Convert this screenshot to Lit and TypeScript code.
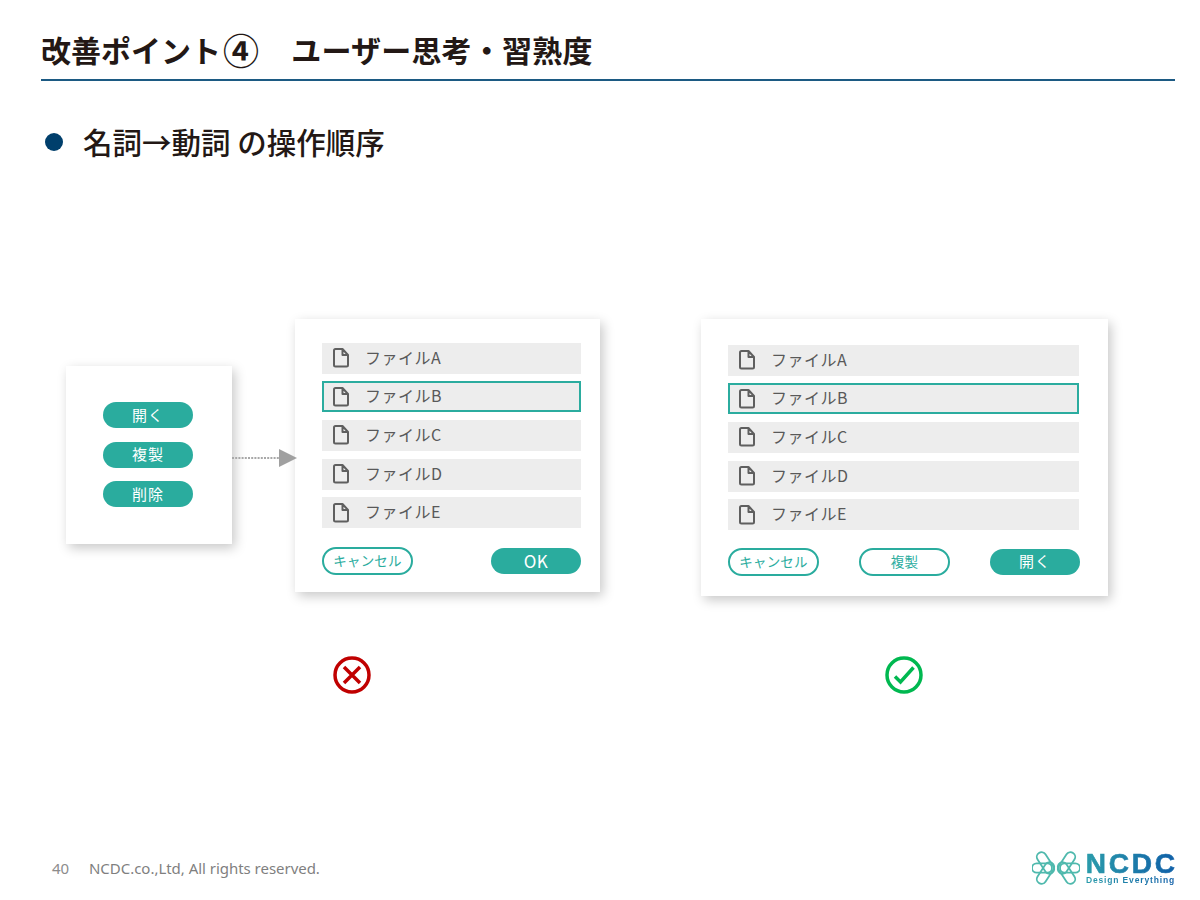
import { LitElement, html, css, svg } from "lit";
import { customElement } from "lit/decorators.js";

const fileIcon = html`<svg class="fi" width="18" height="20" viewBox="0 0 18 20"><path d="M3.500 1H10.500L16 7V17A1.500 1.500 0 0 1 14.500 18.500H3.500A1.500 1.500 0 0 1 2 17V2.500A1.500 1.500 0 0 1 3.500 1Z M10.500 1V7H16" fill="none" stroke="#5f5f5f" stroke-width="2" stroke-linejoin="round"/></svg>`;

const wing = svg`
  <rect x="-24" y="-4.700" width="20" height="9.400" rx="4.700"/>
  <rect x="-12" y="-4.700" width="24" height="9.400" rx="4.700" transform="translate(-10.500 -5) rotate(57)"/>
  <rect x="-12" y="-4.700" width="24" height="9.400" rx="4.700" transform="translate(-10.500 5) rotate(-57)"/>`;

@customElement("app-root")
export class AppRoot extends LitElement {
  static styles = css`
    :host { display: block; width: 1200px; height: 900px; background: #fff; overflow: hidden;
      font-family: "Noto Sans CJK JP", "Noto Sans", sans-serif; color: #231815; }
    .page { width: 1200px; height: 900px; display: flex; flex-direction: column; box-sizing: border-box; }
    .head { margin: 0 25px 0 41px; height: 81px; box-sizing: border-box; border-bottom: 2px solid #1c5a83;
      display: flex; align-items: flex-end; padding-bottom: 7px; }
    h1 { margin: 0; font-size: 30px; line-height: 46px; font-weight: 700; white-space: pre; }
    .num { font-size: 36px; line-height: 0; font-weight: 700; vertical-align: -3px; margin: 0 2px 0 2px; }
    .rest { letter-spacing: .2px; }
    .sub { display: flex; align-items: center; margin: 39px 0 0 45px; height: 44px; }
    .dot { width: 18px; height: 18px; border-radius: 50%; background: #003f6c; margin-right: 20px; }
    h2 { margin: -3px 0 0; font-size: 29.500px; font-weight: 500; line-height: 44px; white-space: pre; color: #231815; }
    .stage { display: flex; align-items: flex-start; margin-top: 155px; padding-left: 66px; height: 335.500px; }
    .card { background: #fff; box-shadow: 3px 4px 11px rgba(0,0,0,.22); box-sizing: border-box; flex: none; }
    .menu { width: 166px; height: 178px; margin-top: 47px; padding: 36px 2px 0 0; display: flex; flex-direction: column; align-items: center; gap: 13.500px; }
    .arrow { margin-top: 129px; margin-right: -2px; width: 65px; height: 20px; flex: none; position: relative; z-index: 1; }
    .dlg { display: flex; flex-direction: column; }
    .d1 { width: 305px; height: 273px; padding: 23.500px 19px 0 27px; }
    .d2 { width: 407px; height: 277px; padding: 25.500px 29px 0 27px; margin-left: 101px; }
    .rows { display: flex; flex-direction: column; gap: 7.700px; }
    .row { height: 31px; background: #ededed; display: flex; align-items: center; padding-left: 10px; box-sizing: border-box;
      font-size: 16px; color: #595959; letter-spacing: .5px; }
    .row.sel { box-shadow: inset 0 0 0 2px #2bac9f; }
    .row .fi { margin-right: 15px; flex: none; }
    .row span { line-height: 1; margin-top: -3px; }
    .btns { display: flex; justify-content: space-between; margin-top: 19.500px; }
    .d2 .btns { margin-top: 18.500px; margin-right: -1px; }
    .btn { width: 90px; height: 26px; border-radius: 13px; box-sizing: border-box; display: flex; align-items: center; justify-content: center;
      font-size: 14px; line-height: 1; }
    .solid { background: #2aac9e; color: #fff; font-size: 15px; letter-spacing: 1px; padding-bottom: 2px; }
    .ok { font-size: 17px; letter-spacing: .5px; padding-bottom: 0; }
    .ghost { border: 2px solid #2aac9e; color: #2aac9e; background: #fff; width: 91px; height: 28px; border-radius: 14px; margin-top: -1px; font-size: 13.500px; letter-spacing: .2px; }
    .verdicts { display: flex; height: 40px; padding-left: 332px; }
    .verdicts svg { flex: none; }
    .verdicts svg + svg { margin-left: 512px; }
    .foot { margin-top: auto; display: flex; align-items: center; height: 50px; margin-bottom: 7px; padding: 0 25px 0 52px; color: #888; }
    .pg { font-family: "Noto Sans", sans-serif; font-size: 15px; width: 37px; color: #8c8c8c; }
    .copy { font-family: "Noto Sans", sans-serif; font-size: 15px; color: #7f7f7f; letter-spacing: -.03px; }
    .logo { margin-left: auto; display: flex; align-items: center; gap: 6px; }
    .word { display: flex; flex-direction: column; align-items: flex-end; font-family: "Liberation Sans", sans-serif; font-weight: 700; }
    .w1, .w2 { background: linear-gradient(90deg, #2b9cab, #0f5ea8); -webkit-background-clip: text; background-clip: text; color: transparent; }
    .w1 { font-size: 28px; line-height: 24px; letter-spacing: 2.800px; margin-right: -2.800px; -webkit-text-stroke: .7px transparent; }
    .w2 { font-size: 8.500px; line-height: 9px; letter-spacing: .85px; }
  `;

  private row(name: string, sel = false) {
    return html`<div class="row ${sel ? "sel" : ""}">${fileIcon}<span>ファイル${name}</span></div>`;
  }

  private rows() {
    return html`<div class="rows">${["A", "B", "C", "D", "E"].map((n) => this.row(n, n === "B"))}</div>`;
  }

  render() {
    return html`<div class="page">
      <div class="head"><h1>改善ポイント<span class="num">④</span><span class="rest">　ユーザー思考・習熟度</span></h1></div>
      <div class="sub"><span class="dot"></span><h2>名詞→動詞 の操作順序</h2></div>
      <div class="stage">
        <div class="card menu">
          <div class="btn solid">開く</div>
          <div class="btn solid">複製</div>
          <div class="btn solid">削除</div>
        </div>
        <svg class="arrow" viewBox="0 0 65 20">
          <line x1="0" y1="10" x2="47" y2="10" stroke="#a8a8a8" stroke-width="2" stroke-dasharray="2 1.200"/>
          <path d="M47 1 L65 10 L47 19Z" fill="#a0a0a0"/>
        </svg>
        <div class="card dlg d1">
          ${this.rows()}
          <div class="btns"><div class="btn ghost">キャンセル</div><div class="btn solid ok">OK</div></div>
        </div>
        <div class="card dlg d2">
          ${this.rows()}
          <div class="btns"><div class="btn ghost">キャンセル</div><div class="btn ghost">複製</div><div class="btn solid">開く</div></div>
        </div>
      </div>
      <div class="verdicts">
        <svg width="40" height="40" viewBox="0 0 40 40"><circle cx="20" cy="20" r="17" fill="none" stroke="#c00000" stroke-width="3.500"/><path d="M12 12L28 28M28 12L12 28" stroke="#c00000" stroke-width="3.500" fill="none"/></svg>
        <svg width="40" height="40" viewBox="0 0 40 40"><circle cx="20" cy="20" r="17" fill="none" stroke="#00b850" stroke-width="3.500"/><path d="M11 21.500L16.500 27L29.500 12.500" stroke="#00b850" stroke-width="3.500" fill="none"/></svg>
      </div>
      <div class="foot">
        <span class="pg">40</span><span class="copy">NCDC.co.,Ltd, All rights reserved.</span>
        <div class="logo">
          <svg width="48" height="34" viewBox="-24 -17 48 34" fill="none" stroke="#4fb9ad" stroke-width="1.800">
            <g>${wing}</g>
            <g transform="scale(-1 1)">${wing}</g>
          </svg>
          <div class="word"><span class="w1">NCDC</span><span class="w2">Design Everything</span></div>
        </div>
      </div>
    </div>`;
  }
}
